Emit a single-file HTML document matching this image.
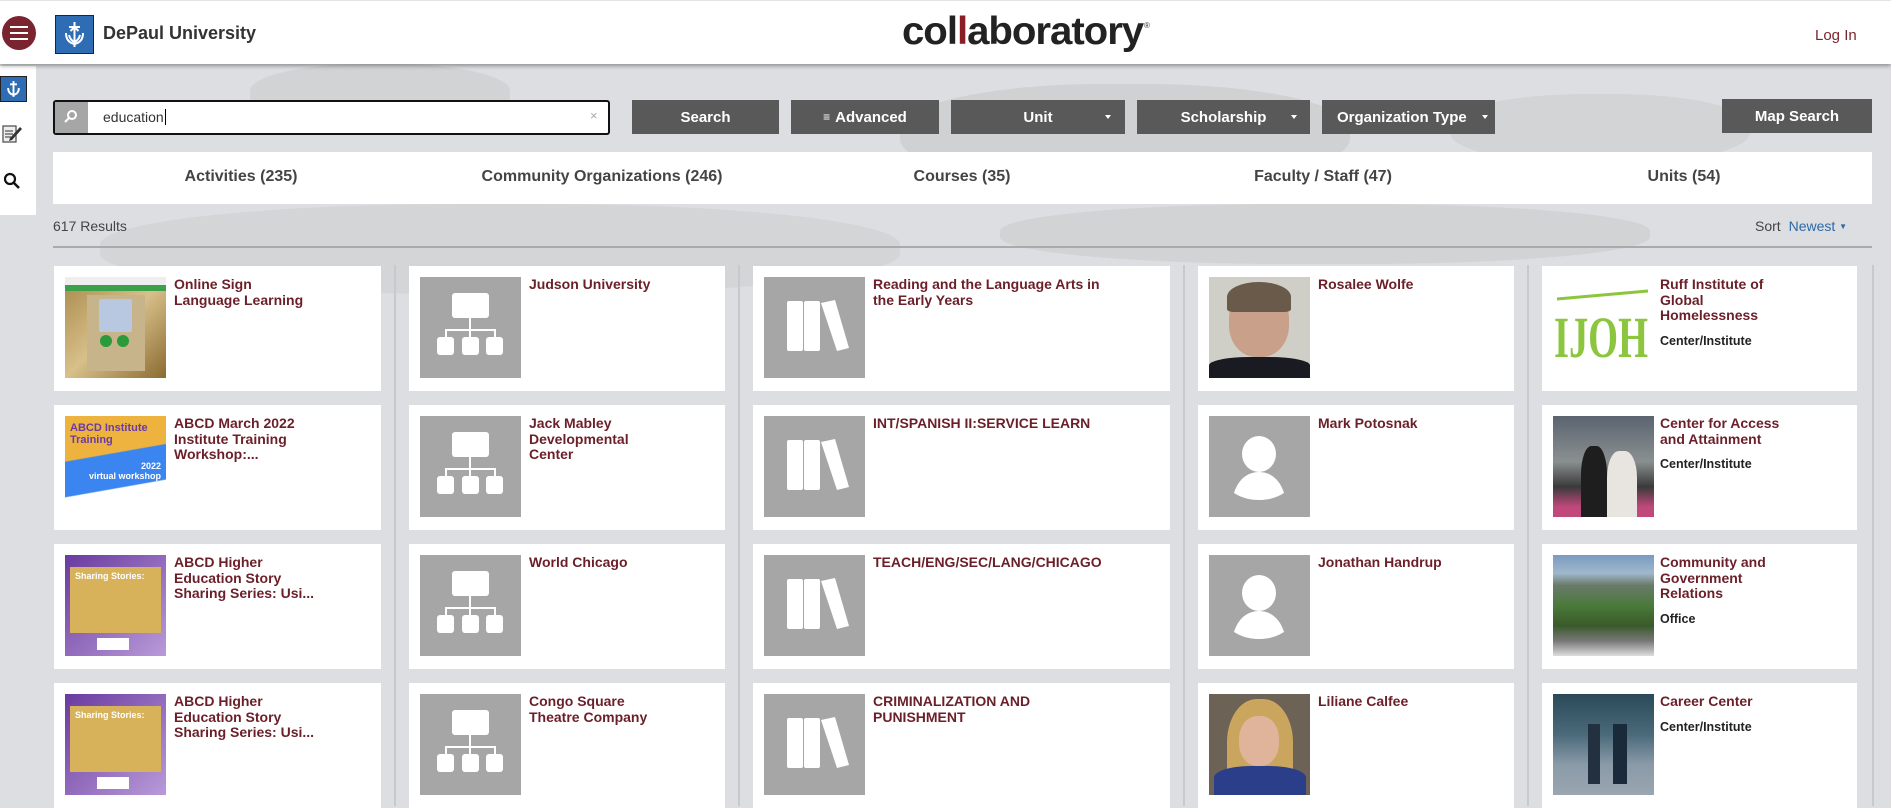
<!DOCTYPE html>
<html><head><meta charset="utf-8">
<style>
*{margin:0;padding:0;box-sizing:border-box}
body{width:1891px;height:806px;overflow:hidden;font-family:"Liberation Sans",sans-serif;position:relative;
background:#dcdee1;}
.bgmap{position:absolute;left:0;top:64px;width:1891px;height:742px;overflow:hidden}
.blob{position:absolute;border-radius:45%}
.hdr{position:absolute;left:0;top:0;width:1891px;height:64px;background:#fff;box-shadow:0 2px 4px rgba(0,0,0,.35);z-index:5;border-top:1px solid #e4e4e4}
.side{position:absolute;left:0;top:66px;width:36px;height:149px;background:#fff;z-index:4}
.abs{position:absolute}
.btn{position:absolute;top:100px;height:34px;background:#595959;color:#fff;font-weight:bold;font-size:15px;display:flex;align-items:center;justify-content:center}
.caret{position:absolute;width:0;height:0;border-left:3.5px solid transparent;border-right:3.5px solid transparent;border-top:4px solid #fff;top:15px}
.tabs{position:absolute;left:53px;top:152px;width:1819px;height:52px;background:#fff}
.tab{position:absolute;top:16px;font-size:16px;color:#444;font-weight:bold;transform:translateX(-50%);white-space:nowrap}
.card{position:absolute;background:#fff;height:125px}
.card .im{position:absolute;left:11px;top:11px;width:101px;height:101px;background:#a6a6a6;overflow:hidden}
.card .t{position:absolute;left:120px;top:11px;font-size:14px;line-height:15.5px;font-weight:bold;color:#6b1f28;width:200px}
.card .s{font-size:12.5px;color:#222;margin-top:10px;display:block}
.vline{position:absolute;top:265px;width:2px;height:541px;background:#c7c9cc}
</style></head><body>
<div class="bgmap">
 <div class="blob" style="left:250px;top:0;width:260px;height:60px;background:#d2d3d5"></div>
 <div class="blob" style="left:900px;top:20px;width:450px;height:100px;background:#d0d1d3"></div>
 <div class="blob" style="left:1450px;top:30px;width:300px;height:70px;background:#d3d4d6"></div>
 <div class="blob" style="left:100px;top:140px;width:800px;height:90px;background:#d4d5d7"></div>
 <div class="blob" style="left:1000px;top:140px;width:650px;height:60px;background:#d2d3d5"></div>
</div>

<div class="hdr">
 <div class="abs" style="left:2px;top:15px;width:34px;height:34px;border-radius:50%;background:#7a2430"></div>
 <div class="abs" style="left:10px;top:25px;width:18px;height:2px;background:#fff;box-shadow:0 6px 0 #fff,0 12px 0 #fff"></div>
 <div class="abs" style="left:55px;top:14px;width:39px;height:39px;background:#2e6db3;border:1px solid #223"></div>
 <svg class="abs" style="left:57px;top:16px" width="35" height="35" viewBox="0 0 35 35"><path d="M17.5 5v25M12 10h11M17.5 10l-4 4M17.5 10l4 4M9 16c0 7 4 10 8.5 11c4.5-1 8.5-4 8.5-11M12 18c1 4 3 6 5.5 7c2.5-1 4.5-3 5.5-7" stroke="#fff" stroke-width="2" fill="none"/></svg>
 <div class="abs" style="left:103px;top:22px;font-size:18px;color:#333;font-weight:bold">DePaul University</div>
 <div class="abs" style="left:902px;top:9px;font-size:39px;font-weight:bold;color:#222;letter-spacing:-1px;transform:scaleX(1.03);transform-origin:left">co<span>l</span><span style="color:#8b1e24">l</span>aboratory</div>
 <div class="abs" style="left:1144px;top:20px;font-size:8px;color:#333">®</div>
 <div class="abs" style="left:1815px;top:26px;font-size:15px;color:#7a2430">Log In</div>
</div>

<div class="side">
 <div class="abs" style="left:0;top:10px;width:27px;height:26px;background:#2e6db3;border:1px solid #222"></div>
 <svg class="abs" style="left:2px;top:12px" width="23" height="22" viewBox="0 0 35 35"><path d="M17.5 5v25M12 10h11M9 16c0 7 4 10 8.5 11c4.5-1 8.5-4 8.5-11" stroke="#fff" stroke-width="3" fill="none"/></svg>
 <svg class="abs" style="left:1px;top:56px" width="22" height="22" viewBox="0 0 22 22"><rect x="2" y="4" width="13" height="16" fill="#eee" stroke="#555" stroke-width="1.3"/><path d="M4 9h8M4 12h8M4 15h6" stroke="#555" stroke-width="1.2"/><path d="M9 16l10-11 2 2-10 11-3 1z" fill="#333"/></svg>
 <svg class="abs" style="left:3px;top:106px" width="18" height="18" viewBox="0 0 18 18"><circle cx="7" cy="7" r="5" stroke="#111" stroke-width="2.2" fill="none"/><path d="M11 11l5 5" stroke="#111" stroke-width="2.5"/></svg>
</div>

<div class="abs" style="left:53px;top:100px;width:557px;height:35px;background:#fff;border:2px solid #111;border-radius:3px"></div>
<div class="abs" style="left:55px;top:102px;width:33px;height:31px;background:#a6a6a6"></div>
<svg class="abs" style="left:63px;top:109px" width="16" height="16" viewBox="0 0 16 16"><circle cx="9" cy="6" r="4" stroke="#fff" stroke-width="2" fill="none"/><path d="M6 9l-4 4" stroke="#fff" stroke-width="2"/></svg>
<div class="abs" style="left:103px;top:109px;font-size:14px;color:#333">education<span style="border-left:1px solid #000;margin-left:1px"></span></div>
<div class="abs" style="left:590px;top:108px;font-size:13px;color:#aaa">×</div>

<div class="btn" style="left:632px;width:147px">Search</div>
<div class="btn" style="left:791px;width:148px"><span style="font-size:12px;margin-right:5px;line-height:6px">≡</span>Advanced</div>
<div class="btn" style="left:951px;width:174px">Unit<span class="caret" style="left:154px"></span></div>
<div class="btn" style="left:1137px;width:173px">Scholarship<span class="caret" style="left:154px"></span></div>
<div class="btn" style="left:1322px;width:173px;justify-content:flex-start;padding-left:15px">Organization Type<span class="caret" style="left:160px"></span></div>
<div class="btn" style="left:1722px;top:99px;width:150px">Map Search</div>

<div class="tabs">
 <div class="tab" style="left:188px">Activities (235)</div>
 <div class="tab" style="left:549px">Community Organizations (246)</div>
 <div class="tab" style="left:909px">Courses (35)</div>
 <div class="tab" style="left:1270px">Faculty / Staff (47)</div>
 <div class="tab" style="left:1631px">Units (54)</div>
</div>

<div class="abs" style="left:53px;top:218px;font-size:14px;color:#444">617 Results</div>
<div class="abs" style="left:1755px;top:218px;font-size:14px;color:#444">Sort <span style="color:#2c6aa8;margin-left:4px">Newest</span> <span style="font-size:8px;color:#2c6aa8;vertical-align:2px">▼</span></div>
<div class="abs" style="left:53px;top:246px;width:1819px;height:2px;background:#aaa"></div>

<div class="vline" style="left:394px"></div>
<div class="vline" style="left:738px"></div>
<div class="vline" style="left:1183px"></div>
<div class="vline" style="left:1527px"></div>
<div class="vline" style="left:1872px"></div>

<svg width="0" height="0" style="position:absolute"><defs>
<g id="org"><rect x="32" y="16" width="37" height="25" rx="3" fill="#fff"/><path d="M50 41v19M26 60V53h49v7" stroke="#fff" stroke-width="2" fill="none"/><rect x="17" y="60" width="17" height="18" rx="3" fill="#fff"/><rect x="42" y="60" width="17" height="18" rx="3" fill="#fff"/><rect x="66" y="60" width="17" height="18" rx="3" fill="#fff"/></g>
<g id="book"><rect x="23" y="24" width="16" height="50" rx="2" fill="#fff"/><rect x="40" y="24" width="16" height="50" rx="2" fill="#fff"/><path d="M57 26l14-3 14 48-12 3z" fill="#fff"/></g>
<g id="person"><ellipse cx="50" cy="38" rx="17" ry="18" fill="#fff"/><path d="M50 56c-12 0-21 8-25 21c8 5 16 7 25 7s17-2 25-7c-4-13-13-21-25-21z" fill="#fff"/></g>
</defs></svg>

<div class="card" style="left:54px;top:266px;width:327px"><div class="im" style="background:linear-gradient(135deg,#a8894a,#d8c08a 50%,#8a6a30)"><div class="abs" style="left:0;top:0;width:101px;height:8px;background:#eee"></div><div class="abs" style="left:0;top:8px;width:101px;height:6px;background:#3aa04a"></div><div class="abs" style="left:22px;top:18px;width:58px;height:76px;background:#c8b48a"></div><div class="abs" style="left:34px;top:22px;width:33px;height:33px;background:#b8c8e0;border-radius:2px"></div><div class="abs" style="left:35px;top:58px;width:12px;height:12px;border-radius:50%;background:#2a9a3a"></div><div class="abs" style="left:52px;top:58px;width:12px;height:12px;border-radius:50%;background:#2a9a3a"></div></div><div class="t">Online Sign<br>Language Learning</div></div>
<div class="card" style="left:54px;top:405px;width:327px"><div class="im" style="background:linear-gradient(170deg,#eeb33e 38%,#3a85f0 39%,#3a85f0 68%,#fff 69%)"><div class="abs" style="left:5px;top:6px;font-size:11px;font-weight:bold;color:#6a3aa8;line-height:12px">ABCD Institute<br>Training</div><div class="abs" style="left:24px;top:45px;font-size:9px;color:#fff;font-weight:bold;text-align:right;width:72px">2022<br>virtual workshop</div></div><div class="t">ABCD March 2022<br>Institute Training<br>Workshop:...</div></div>
<div class="card" style="left:54px;top:544px;width:327px"><div class="im" style="background:linear-gradient(135deg,#6a3aa0,#b89ad8)"><div class="abs" style="left:5px;top:12px;width:91px;height:66px;background:#d7b25a"></div><div class="abs" style="left:10px;top:16px;font-size:9px;color:#fff;font-weight:bold">Sharing Stories:</div><div class="abs" style="left:32px;top:83px;width:32px;height:12px;background:#fff"></div></div><div class="t">ABCD Higher<br>Education Story<br>Sharing Series: Usi...</div></div>
<div class="card" style="left:54px;top:683px;width:327px"><div class="im" style="background:linear-gradient(135deg,#6a3aa0,#b89ad8)"><div class="abs" style="left:5px;top:12px;width:91px;height:66px;background:#d7b25a"></div><div class="abs" style="left:10px;top:16px;font-size:9px;color:#fff;font-weight:bold">Sharing Stories:</div><div class="abs" style="left:32px;top:83px;width:32px;height:12px;background:#fff"></div></div><div class="t">ABCD Higher<br>Education Story<br>Sharing Series: Usi...</div></div>

<div class="card" style="left:409px;top:266px;width:316px"><div class="im"><svg width="101" height="101"><use href="#org"/></svg></div><div class="t">Judson University</div></div>
<div class="card" style="left:409px;top:405px;width:316px"><div class="im"><svg width="101" height="101"><use href="#org"/></svg></div><div class="t">Jack Mabley<br>Developmental<br>Center</div></div>
<div class="card" style="left:409px;top:544px;width:316px"><div class="im"><svg width="101" height="101"><use href="#org"/></svg></div><div class="t">World Chicago</div></div>
<div class="card" style="left:409px;top:683px;width:316px"><div class="im"><svg width="101" height="101"><use href="#org"/></svg></div><div class="t">Congo Square<br>Theatre Company</div></div>

<div class="card" style="left:753px;top:266px;width:417px"><div class="im"><svg width="101" height="101"><use href="#book"/></svg></div><div class="t" style="width:270px">Reading and the Language Arts in<br>the Early Years</div></div>
<div class="card" style="left:753px;top:405px;width:417px"><div class="im"><svg width="101" height="101"><use href="#book"/></svg></div><div class="t" style="width:270px">INT/SPANISH II:SERVICE LEARN</div></div>
<div class="card" style="left:753px;top:544px;width:417px"><div class="im"><svg width="101" height="101"><use href="#book"/></svg></div><div class="t" style="width:270px">TEACH/ENG/SEC/LANG/CHICAGO</div></div>
<div class="card" style="left:753px;top:683px;width:417px"><div class="im"><svg width="101" height="101"><use href="#book"/></svg></div><div class="t" style="width:270px">CRIMINALIZATION AND<br>PUNISHMENT</div></div>

<div class="card" style="left:1198px;top:266px;width:316px"><div class="im" style="background:#cfcfc8"><div class="abs" style="left:20px;top:10px;width:60px;height:70px;border-radius:45%;background:#c9a08a"></div><div class="abs" style="left:18px;top:5px;width:64px;height:30px;border-radius:50% 50% 10% 10%;background:#6a5a4a"></div><div class="abs" style="left:0;top:80px;width:101px;height:21px;background:#1a1a22;border-radius:40% 40% 0 0"></div></div><div class="t">Rosalee Wolfe</div></div>
<div class="card" style="left:1198px;top:405px;width:316px"><div class="im"><svg width="101" height="101"><use href="#person"/></svg></div><div class="t">Mark Potosnak</div></div>
<div class="card" style="left:1198px;top:544px;width:316px"><div class="im"><svg width="101" height="101"><use href="#person"/></svg></div><div class="t">Jonathan Handrup</div></div>
<div class="card" style="left:1198px;top:683px;width:316px"><div class="im" style="background:#6d6256"><div class="abs" style="left:18px;top:5px;width:66px;height:96px;border-radius:45% 45% 0 0;background:#c9a55e"></div><div class="abs" style="left:30px;top:22px;width:40px;height:50px;border-radius:45%;background:#e0b49a"></div><div class="abs" style="left:5px;top:72px;width:92px;height:29px;background:#2a3e8a;border-radius:40% 40% 0 0"></div></div><div class="t">Liliane Calfee</div></div>

<div class="card" style="left:1542px;top:266px;width:315px"><div class="im" style="background:#fff;left:10px;width:100px"><svg width="100" height="101" viewBox="0 0 100 101"><path d="M5 22L96 14" stroke="#8cc63f" stroke-width="3"/><text x="2" y="80" font-family="Liberation Serif" font-weight="bold" font-size="58" fill="#8cc63f" textLength="94" lengthAdjust="spacingAndGlyphs">IJOH</text></svg></div><div class="t" style="left:118px">Ruff Institute of<br>Global<br>Homelessness<span class="s">Center/Institute</span></div></div>
<div class="card" style="left:1542px;top:405px;width:315px"><div class="im" style="background:linear-gradient(180deg,#5a6470 0%,#8a8f90 45%,#3a3a3a 70%,#c0487a 90%)"><div class="abs" style="left:28px;top:30px;width:26px;height:71px;background:#1e1e1e;border-radius:40% 40% 0 0"></div><div class="abs" style="left:54px;top:35px;width:30px;height:66px;background:#e8e4df;border-radius:40% 40% 0 0"></div></div><div class="t" style="left:118px">Center for Access<br>and Attainment<span class="s">Center/Institute</span></div></div>
<div class="card" style="left:1542px;top:544px;width:315px"><div class="im" style="background:linear-gradient(180deg,#7a9ac0 0%,#a0b8cc 18%,#6a7a6a 30%,#4a7a3a 50%,#3a5a2a 70%,#777 85%,#ddd)"></div><div class="t" style="left:118px">Community and<br>Government<br>Relations<span class="s">Office</span></div></div>
<div class="card" style="left:1542px;top:683px;width:315px"><div class="im" style="background:linear-gradient(180deg,#2a4a5a 0%,#4a6a7a 40%,#8a9aa8 70%,#9aa6b0)"><div class="abs" style="left:35px;top:30px;width:12px;height:60px;background:#223040"></div><div class="abs" style="left:60px;top:30px;width:14px;height:60px;background:#1a2a3a"></div></div><div class="t" style="left:118px">Career Center<span class="s">Center/Institute</span></div></div>
</body></html>
